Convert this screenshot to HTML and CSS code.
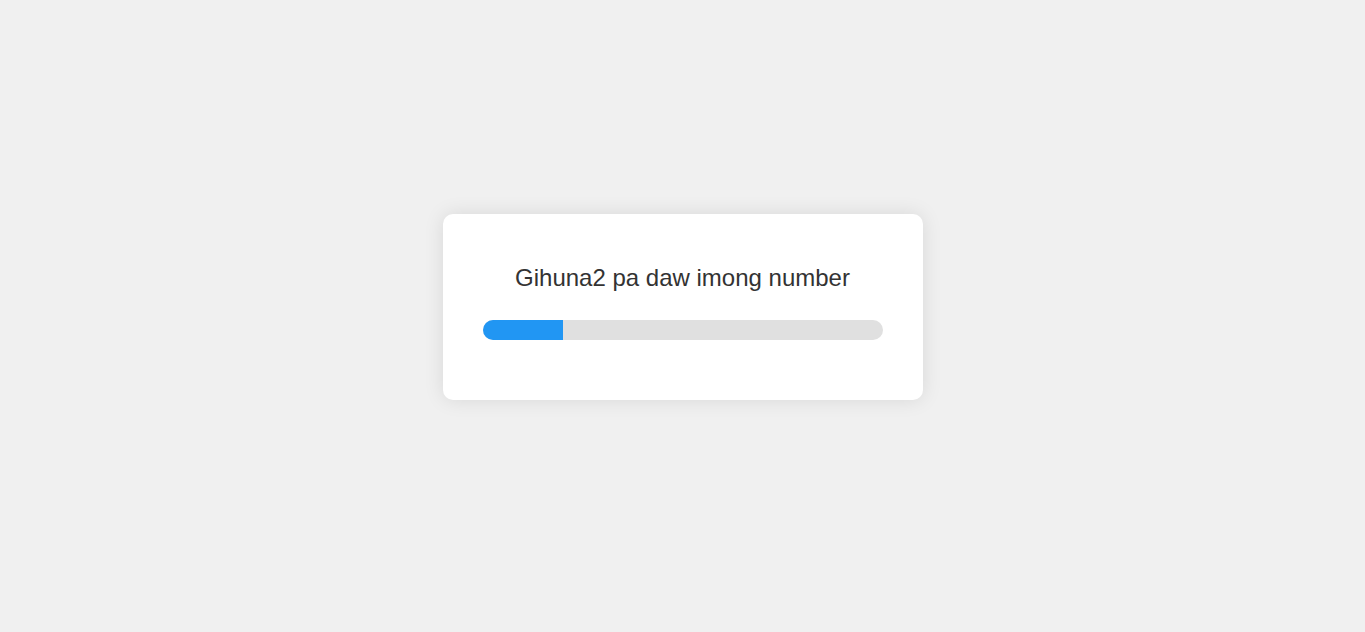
FILE: index.html
```html
<!DOCTYPE html>
<html lang="en">
<head>
<meta charset="utf-8">
<title>Progress</title>
<link rel="stylesheet" href="styles.css">
</head>
<body>
<main class="page">
  <section class="card">
    <p class="title">Gihuna2 pa daw imong number</p>
    <div class="track"><div class="fill" style="width: 20%"></div></div>
  </section>
</main>
</body>
</html>
```

FILE: styles.css
```css
html, body {
  margin: 0;
  padding: 0;
  background: #f0f0f0;
  font-family: "Liberation Sans", Arial, sans-serif;
}
.page {
  box-sizing: border-box;
  min-height: 100vh;
  display: flex;
  justify-content: center;
  align-items: center;
  padding-bottom: 18px;
}
.card {
  box-sizing: border-box;
  width: 480px;
  padding: 40px 40px 60px;
  background: #fff;
  border-radius: 10px;
  box-shadow: 0 0 20px rgba(0, 0, 0, 0.1);
}
.title {
  margin: 9px 0 28px;
  font-size: 24px;
  line-height: 29px;
  color: #333;
  text-align: center;
}
.track {
  height: 20px;
  background: #e0e0e0;
  border-radius: 10px;
  overflow: hidden;
}
.fill {
  height: 100%;
  background: #2196f3;
}
```
